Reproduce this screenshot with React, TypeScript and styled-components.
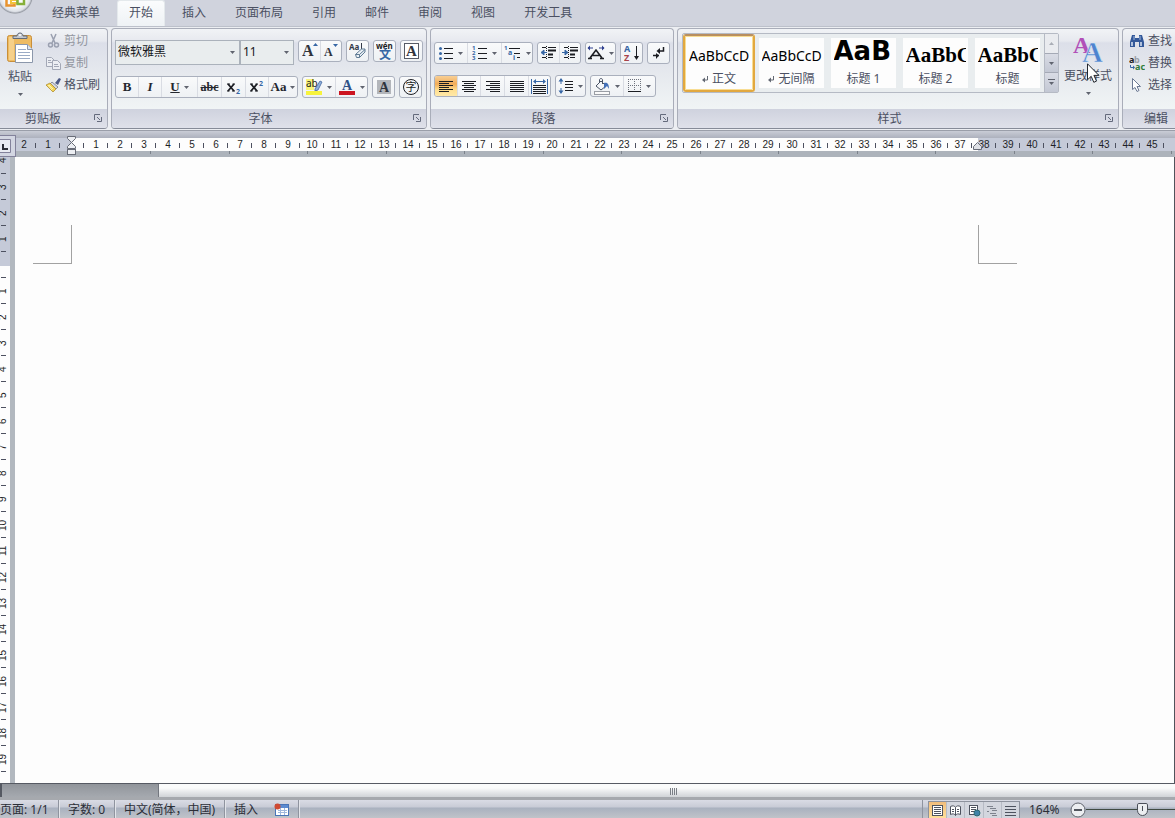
import React from "react";
import styled, { createGlobalStyle, css } from "styled-components";

const GlobalStyle = createGlobalStyle`
  * { box-sizing: border-box; }
  html, body, #root { height: 100%; }
  body {
    margin: 0;
    overflow: hidden;
    font-family: "Noto Sans", "Noto Sans CJK SC", sans-serif;
    font-size: 12px;
    line-height: 16px;
    color: #4b5062;
  }
  button, select, input { font: inherit; color: inherit; margin: 0; padding: 0; }
  button { border: 0; background: none; }
  svg { display: block; flex: none; }
`;

const Window = styled.div`
  display: flex;
  flex-direction: column;
  height: 100vh;
  overflow: hidden;
  background: #d0d3dd;
`;

/* ---------- tabs ---------- */
const TabBar = styled.nav`
  display: flex;
  flex: none;
  height: 26px;
  background: #d0d3dd;
`;
const OfficeButton = styled.button`
  width: 40px;
  height: 26px;
  overflow: hidden;
`;
const Tabs = styled.div`
  display: flex;
  gap: 5px;
`;
const Tab = styled.button<{ $active?: boolean }>`
  height: 26px;
  padding: 0 11px 1px;
  border: 1px solid transparent;
  border-bottom: 0;
  white-space: nowrap;
  ${(p) =>
    p.$active &&
    css`
      border-color: #e4e9ec;
      border-radius: 3px 3px 0 0;
      background: linear-gradient(#fbfcfd, #eef2f5);
    `}
`;

/* ---------- ribbon ---------- */
const Ribbon = styled.div`
  display: flex;
  flex: none;
  gap: 3px;
  height: 105px;
  padding-top: 1px;
  overflow: hidden;
  background: #eceef2;
  border-top: 1px solid #bcc0ca;
  border-bottom: 1px solid #9a9ea9;
`;
const Group = styled.section<{ $w: number; $bleed?: boolean }>`
  display: flex;
  flex-direction: column;
  flex: none;
  width: ${(p) => p.$w}px;
  height: 101px;
  margin-left: ${(p) => (p.$bleed ? "-5px" : "0")};
  border: 1px solid #a9adb9;
  border-bottom-color: #868b98;
  border-radius: 4px;
  background: linear-gradient(#f1f3f6 0, #e7e9ef 12px, #dcdfe9 14px, #e6e9ee 45px, #f0f4f5 79px);
  overflow: hidden;
`;
const GroupBody = styled.div<{ $top?: number; $gap?: number; $side?: number }>`
  display: flex;
  flex-direction: column;
  flex: 1;
  gap: ${(p) => p.$gap ?? 0}px;
  padding: ${(p) => p.$top ?? 0}px ${(p) => p.$side ?? 3}px 0;
`;
const GroupRow = styled.div`
  display: flex;
  flex: 1;
`;
const GroupFooter = styled.footer`
  display: flex;
  align-items: center;
  height: 19px;
  background: linear-gradient(#cfd2de, #dfe1ea);
`;
const GroupName = styled.span`
  flex: 1;
  text-align: center;
`;
const Launcher = styled.button`
  width: 17px;
  height: 14px;
  padding: 0 0 2px 4px;
`;
const Row = styled.div`
  display: flex;
  align-items: flex-start;
  gap: 4px;
`;
const Strip = styled.div`
  display: flex;
  height: 22px;
  border: 1px solid #aab0bd;
  border-radius: 3px;
  background: linear-gradient(#f9fafb, #eef1f4);
  overflow: hidden;
`;
const ToolButton = styled.button<{ $w?: number; $on?: boolean }>`
  display: flex;
  align-items: center;
  justify-content: center;
  gap: 4px;
  width: ${(p) => p.$w ?? 21}px;
  height: 20px;
  color: #24272e;
  & + & { border-left: 1px solid #d9dce3; }
  ${(p) =>
    p.$on &&
    css`
      background: linear-gradient(#f8cf94, #f2ac58 40%, #ffdf90 70%, #ffe9a8);
    `}
`;
const SerifLabel = styled.span<{ $size?: number; $italic?: boolean; $line?: string }>`
  font-family: "Liberation Serif", serif;
  font-weight: bold;
  font-size: ${(p) => p.$size ?? 13}px;
  font-style: ${(p) => (p.$italic ? "italic" : "normal")};
  text-decoration: ${(p) => p.$line ?? "none"};
  line-height: 20px;
`;
const Combo = styled.label<{ $w: number }>`
  display: flex;
  align-items: center;
  width: ${(p) => p.$w}px;
  height: 25px;
  padding: 0 4px 1px 2px;
  border: 1px solid #abb2bb;
  background: #e9edee;
  color: #15171b;
`;
const ComboSelect = styled.select`
  flex: 1;
  min-width: 0;
  appearance: none;
  border: 0;
  outline: 0;
  background: transparent;
`;
const Combos = styled.div`
  display: flex;
  width: 179px;
`;

const BigButton = styled.button<{ $w: number }>`
  position: relative;
  display: flex;
  flex-direction: column;
  align-items: center;
  width: ${(p) => p.$w}px;
  height: 68px;
  padding-top: 2px;
  gap: 5px;
  white-space: nowrap;
`;
const BigLabel = styled.span`
  padding-bottom: 3px;
`;
const SmallList = styled.div<{ $pad: number }>`
  display: flex;
  flex-direction: column;
  padding: 1px 0 0 ${(p) => p.$pad}px;
`;
const SmallButton = styled.button`
  display: flex;
  align-items: center;
  gap: 3px;
  height: 22px;
  white-space: nowrap;
  &:disabled { color: #92969f; }
`;
const Pointer = styled.svg`
  position: absolute;
  left: 24px;
  top: 30px;
`;

/* ---------- style gallery ---------- */
const Gallery = styled.div`
  display: flex;
  width: 377px;
  height: 60px;
  border: 1px solid #b5bac4;
  border-radius: 2px;
  background: #e9edef;
`;
const GalleryItems = styled.div`
  display: flex;
  flex: 1;
`;
const StyleItem = styled.button<{ $on?: boolean }>`
  width: 72px;
  height: 58px;
  border: 4px solid #e9edef;
  border-right-width: 3px;
  background: #fdfdfd;
  overflow: hidden;
  white-space: nowrap;
  ${(p) =>
    p.$on &&
    css`
      border: 2px solid #e2a83f;
      border-top-color: #b98f60;
      border-radius: 3px;
      padding: 2px;
      box-shadow: inset 0 0 0 1px #f8dd93;
    `}
`;
const Preview = styled.span<{ $font: string; $size: number; $bold?: boolean }>`
  display: block;
  width: 60px;
  height: 32px;
  margin: 0 auto;
  overflow: hidden;
  text-align: left;
  line-height: ${(p) => (p.$size > 24 ? 27 : 35)}px;
  font-family: ${(p) => p.$font};
  font-size: ${(p) => p.$size}px;
  font-weight: ${(p) => (p.$bold ? "bold" : "normal")};
  color: #000;
`;
const StyleName = styled.span`
  display: flex;
  align-items: center;
  justify-content: center;
  gap: 4px;
  height: 18px;
`;
const GalleryScroll = styled.div`
  display: flex;
  flex-direction: column;
  width: 14px;
  border-left: 1px solid #b5bac4;
`;
const ScrollStep = styled.button<{ $dim?: boolean }>`
  display: flex;
  flex: 1;
  align-items: center;
  justify-content: center;
  background: ${(p) => (p.$dim ? "#e9ebef" : "linear-gradient(#d9dce5, #c3c8d4)")};
  & + & { border-top: 1px solid #a4a9b5; }
`;

/* ---------- rulers and page ---------- */
const RulerRow = styled.div`
  display: flex;
  flex: none;
  height: 26px;
  padding-top: 4px;
  background: linear-gradient(#c9ccd6, #adb1bd 7px, #c9ced6 8px);
`;
const TabStop = styled.button`
  display: flex;
  align-items: center;
  width: 16px;
  height: 22px;
  border: 1px solid #83829b;
  border-left: 0;
  background: #d3d6e2;
`;
const HRuler = styled.div`
  flex: 1;
  min-width: 0;
  height: 22px;
  padding-top: 3px;
  overflow: hidden;
`;
const Scale = styled.div`
  position: relative;
  display: flex;
  height: 13px;
  background: linear-gradient(90deg, #c5cad8 0 55px, #fdfdfd 55px 962px, #c5cad8 962px);
`;
const ScaleBase = styled.div`
  height: 6px;
  background:
    repeating-linear-gradient(90deg, transparent 0 77px, #7c828b 77px 78px, transparent 78px 156px, #7c828b 156px 157px) 57px 0 no-repeat,
    #adb3bb;
  background-size: 100% 3px, auto;
`;
const ScaleCell = styled.span<{ $first?: boolean }>`
  flex: none;
  width: ${(p) => (p.$first ? 20 : 24)}px;
  padding-right: ${(p) => (p.$first ? 4 : 0)}px;
  font: 10px/14px "Liberation Sans", sans-serif;
  color: #1d1f26;
  text-align: center;
  background: linear-gradient(#4d5160, #4d5160) right 5px / 1px 5px no-repeat;
`;
const Marker = styled.svg<{ $x: number }>`
  position: absolute;
  top: -2px;
  left: ${(p) => p.$x}px;
`;
const Body = styled.div`
  display: flex;
  flex: 1;
  min-height: 0;
`;
const VRuler = styled.div`
  display: flex;
  flex-direction: column;
  align-items: flex-start;
  width: 15px;
  overflow: hidden;
  border-right: 5px solid #b2b8bf;
  background: linear-gradient(#c5cad8 0 109px, #fdfdfd 109px);
`;
const VCell = styled.span<{ $first?: boolean }>`
  flex: none;
  width: 10px;
  height: ${(p) => (p.$first ? 17 : 26)}px;
  padding-left: 4px;
  writing-mode: vertical-rl;
  transform: rotate(180deg);
  font: 10px/6px "Liberation Sans", sans-serif;
  color: #1d1f26;
  text-align: ${(p) => (p.$first ? "right" : "center")};
  background: linear-gradient(#4d5160, #4d5160) 4px 0 / 5px 1px no-repeat;
`;
const Paper = styled.main`
  flex: 1;
  padding: 68px 0 0 18px;
  background: #fdfdfd;
  border-right: 1px solid #4f535b;
`;
const Crops = styled.div`
  display: flex;
  justify-content: space-between;
  width: 984px;
`;
const Crop = styled.span<{ $right?: boolean }>`
  width: 39px;
  height: 39px;
  border: 0 solid #a2a2a2;
  border-bottom-width: 1px;
  border-left-width: ${(p) => (p.$right ? 1 : 0)}px;
  border-right-width: ${(p) => (p.$right ? 0 : 1)}px;
`;

/* ---------- bottom bars ---------- */
const ScrollBar = styled.div`
  display: flex;
  flex: none;
  height: 17px;
  border-top: 1px solid #565a63;
  border-bottom: 3px solid #a6a9ae;
  background: #a2a6ac;
`;
const ScrollTrack = styled.div`
  width: 158px;
  background: linear-gradient(90deg, #555962 0 2px, transparent 2px), linear-gradient(#91959b, #a5a9af);
`;
const ScrollThumb = styled.div`
  display: flex;
  flex: 1;
  align-items: center;
  justify-content: center;
  border-left: 1px solid #73777f;
  background: linear-gradient(#fafbfb 30%, #d0d3d7);
  padding: 2px 0 0 13px;
`;
const StatusBar = styled.footer`
  display: flex;
  flex: none;
  height: 18px;
  overflow: hidden;
  background: linear-gradient(#dadce5, #c8cbd6 7px, #a9b1bf 8px, #c0c3c9);
  color: #2b2e37;
`;
const StatusItem = styled.button<{ $w: number; $sep?: boolean; $pad?: number }>`
  display: flex;
  align-items: center;
  width: ${(p) => p.$w}px;
  height: 18px;
  padding-left: ${(p) => p.$pad ?? 9}px;
  padding-top: 2px;
  white-space: nowrap;
  ${(p) =>
    p.$sep &&
    css`
      border-right: 1px solid #8f949f;
      box-shadow: 1px 0 #e3e5ea;
    `}
`;
const StatusSpacer = styled.div`
  flex: 1;
  border-right: 1px solid #8f949f;
`;
const Views = styled.div`
  display: flex;
  width: 92px;
  height: 17px;
  margin: 1px 9px 0 5px;
  border: 1px solid #8d929d;
  border-bottom: 0;
  background: #d3d6de;
`;
const ViewButton = styled.button<{ $on?: boolean }>`
  display: flex;
  flex: 1;
  align-items: center;
  justify-content: center;
  padding-top: 2px;
  background: ${(p) => (p.$on ? "linear-gradient(#f1bd7c, #ffe09a)" : "transparent")};
  & + & { border-left: 1px solid #b7bbc5; }
`;
const ZoomLevel = styled.button`
  width: 41px;
  height: 18px;
  padding-top: 2px;
  text-align: left;
`;
const ZoomOut = styled.button`
  width: 16px;
  height: 18px;
  padding-top: 2px;
`;
const thumb = css`
  appearance: none;
  width: 11px;
  height: 13px;
  border: 1px solid #4a4e58;
  border-radius: 2px 2px 6px 6px;
  background: linear-gradient(#4a4e58, #4a4e58) center 2px / 1px 5px no-repeat, #eceef1;
`;
const ZoomSlider = styled.input`
  appearance: none;
  flex: none;
  width: 118px;
  height: 18px;
  margin-right: -29px;
  padding-top: 1px;
  background: linear-gradient(#3f4a42, #3f4a42) 0 9px / 100% 1px no-repeat;
  &::-webkit-slider-thumb { ${thumb} }
  &::-moz-range-thumb { ${thumb} }
`;
const ZoomLabel = styled.label`
  display: flex;
`;

/* ---------- icons ---------- */
const Caret = () => (
  <svg width="5" height="3" viewBox="0 0 5 3"><path d="M0 0h5L2.5 3z" fill="#60646f" /></svg>
);
const ink = "#1b1d22";
const blue = "#3767a5";

const OfficeLogo = () => (
  <svg width="40" height="26" viewBox="0 0 40 26">
    <defs>
      <radialGradient id="orb" cx="0.5" cy="0.5" r="0.5">
        <stop offset="0.6" stopColor="#fafbfc" />
        <stop offset="0.86" stopColor="#dde0e6" />
        <stop offset="0.95" stopColor="#9a9ea8" />
        <stop offset="1" stopColor="#c6c9d1" />
      </radialGradient>
    </defs>
    <circle cx="15" cy="-4" r="18" fill="url(#orb)" />
    <path d="M6.500 -4v9.500h8v-9" fill="none" stroke="#e8932f" strokeWidth="2.500" />
    <path d="M11 3v-3h6v3z" fill="#fff" stroke="#f3c33c" strokeWidth="2" />
    <path d="M17.500 -4v8h6.500v-8" fill="none" stroke="#86b03a" strokeWidth="2.500" />
  </svg>
);
const PasteIcon = () => (
  <svg width="28" height="32" viewBox="0 0 28 32">
    <rect x="1.500" y="3.500" width="24" height="26" rx="2" fill="#eebb62" stroke="#c98f3a" />
    <rect x="3" y="5" width="5" height="23" fill="#f6d08a" />
    <path d="M7 6.500V4h4c0-4 6-4 6 0h4v2.500z" fill="#c3c8d0" stroke="#636b78" />
    <circle cx="14" cy="3" r="1" fill="#fff" />
    <path d="M9.500 12.500h12l5 5v13h-17z" fill="#fff" stroke="#8b97ab" />
    <path d="M21.500 12.500v5h5" fill="#dce4f0" stroke="#8b97ab" />
    <path d="M12 17.500h8M12 20.500h12M12 23.500h12M12 26.500h12" stroke="#9aabc6" />
  </svg>
);
const CutIcon = () => (
  <svg width="15" height="16" viewBox="0 0 15 16" fill="none" stroke="#9aa0b0">
    <path d="M5 1l4 9M10 1L6 10" strokeWidth="1.500" />
    <circle cx="4.500" cy="12" r="2" strokeWidth="1.500" /><circle cx="10.500" cy="12" r="2" strokeWidth="1.500" />
  </svg>
);
const CopyIcon = () => (
  <svg width="15" height="16" viewBox="0 0 15 16" fill="#eceef3" stroke="#a3a8b6">
    <path d="M.5 2.500h5l3 3v6h-8z" /><path d="M2 5.500h3M2 7.500h4" />
    <path d="M6.500 5.500h5l3 3v6h-8z" /><path d="M8 9.500h4M8 11.500h5" />
  </svg>
);
const BrushIcon = () => (
  <svg width="15" height="16" viewBox="0 0 15 16">
    <path d="M9 6l4-5 2 1-3 6z" fill="#4d5a86" />
    <path d="M6 5l6 5-2 2-6-5z" fill="#d4d8e2" stroke="#666d7d" strokeWidth="0.7" />
    <path d="M4 6l6 6-3 3L0 8z" fill="#f3d558" stroke="#a98425" strokeWidth="0.7" />
    <path d="M3 8l4 4M2 8l4 5" stroke="#fff3ac" />
  </svg>
);
const LauncherIcon = () => (
  <svg width="8" height="8" viewBox="0 0 8 8" fill="none" stroke="#646a7c">
    <path d="M.5 6V.5H6M3 3l3 3M7.500 3v4.500H3" />
  </svg>
);
const GrowFont = ({ down }: { down?: boolean }) => (
  <svg width="16" height="18" viewBox="0 0 16 18">
    <text x={down ? 1 : 0} y="14" fontFamily="Liberation Serif" fontWeight="bold" fontSize={down ? 12 : 16} fill="#30343c">A</text>
    <path d={down ? "M10 2h5l-2.500 3z" : "M11 4h5l-2.500-3z"} fill={blue} />
  </svg>
);
const ClearFormat = () => (
  <svg width="18" height="18" viewBox="0 0 18 18">
    <text x="0" y="8" fontFamily="Noto Sans" fontSize="8" fontWeight="bold" fill="#333a48">Aa</text>
    <path d="M12.500 1v7" stroke="#333a48" />
    <path d="M6.500 12.500l6-5.500h3.500v3l-5.500 5.500h-3z" fill="#eaf0f5" stroke="#5f7b94" />
    <path d="M6.500 12.500h4l5.500-5M10.500 12.500v3" fill="none" stroke="#5f7b94" />
  </svg>
);
const Phonetic = () => (
  <svg width="18" height="18" viewBox="0 0 18 18">
    <text x="0" y="7" fontFamily="Noto Sans" fontSize="8" fontWeight="bold" fill={ink}>wén</text>
    <text x="3" y="17" fontFamily="Noto Sans CJK SC" fontSize="12" fontWeight="bold" fill={blue}>文</text>
  </svg>
);
const CharBorder = () => (
  <svg width="17" height="17" viewBox="0 0 17 17">
    <rect x="1.500" y="0.500" width="14" height="15" fill="#fff" stroke="#565b66" />
    <text x="8.500" y="13" textAnchor="middle" fontFamily="Liberation Serif" fontWeight="bold" fontSize="15" fill="#30343c">A</text>
  </svg>
);
const CharShade = () => (
  <svg width="16" height="16" viewBox="0 0 16 16">
    <rect x="1" y="1" width="14" height="14" fill="#b3b6bb" />
    <text x="8" y="13" textAnchor="middle" fontFamily="Liberation Serif" fontWeight="bold" fontSize="14" fill="#30343c">A</text>
  </svg>
);
const Enclosed = () => (
  <svg width="18" height="18" viewBox="0 0 18 18">
    <circle cx="9" cy="9" r="7.500" fill="none" stroke={ink} />
    <text x="9" y="13" textAnchor="middle" fontFamily="Noto Sans CJK SC" fontSize="11" fill={ink}>字</text>
  </svg>
);
const Script = ({ sup }: { sup?: boolean }) => (
  <svg width="16" height="16" viewBox="0 0 16 16">
    <path d="M2 5l6 7M8 5l-6 7" stroke={ink} strokeWidth="1.800" />
    <path d="M1 5h3M6.500 5H9M1 12h2.500M6 12h3" stroke={ink} />
    <text x="10" y={sup ? 7 : 15} fontFamily="Noto Sans" fontWeight="bold" fontSize="7" fill={blue}>2</text>
  </svg>
);
const Highlight = () => (
  <svg width="17" height="18" viewBox="0 0 17 18">
    <rect x="0" y="1" width="8" height="11" fill="#f8f37a" />
    <text x="0" y="9" fontFamily="Noto Sans" fontSize="10" fill={ink}>ab</text>
    <path d="M9 11l5-8 2 1-4 8-3 1z" fill="#8fb0dc" stroke="#44689f" strokeWidth="0.8" />
    <rect x="0" y="13" width="16" height="4" fill="#f7f33c" />
  </svg>
);
const FontColor = () => (
  <svg width="17" height="18" viewBox="0 0 17 18">
    <text x="8" y="12" textAnchor="middle" fontFamily="Liberation Serif" fontWeight="bold" fontSize="14" fill="#2f5187">A</text>
    <rect x="0" y="13" width="16" height="4" fill="#cc1420" />
  </svg>
);
const Bullets = () => (
  <svg width="15" height="16" viewBox="0 0 15 16">
    {[3, 8, 13].map((y) => <g key={y}><circle cx="1.500" cy={y + 0.5} r="1.500" fill={blue} /><path d={`M5 ${y}.5h9`} stroke={ink} /></g>)}
  </svg>
);
const Numbers = () => (
  <svg width="16" height="16" viewBox="0 0 16 16">
    {[3, 8, 13].map((y, i) => (
      <g key={y}>
        <text x="0" y={y + 2} fontFamily="Noto Sans" fontWeight="bold" fontSize="6" fill={blue}>{i + 1}</text>
        <path d={`M6 ${y}.5h9`} stroke={ink} />
      </g>
    ))}
  </svg>
);
const Multilevel = () => (
  <svg width="18" height="16" viewBox="0 0 18 16">
    <g fontFamily="Noto Sans" fontWeight="bold" fill={blue}>
      <text x="0" y="5" fontSize="6">1</text><text x="4" y="10" fontSize="7">a</text><text x="9" y="15" fontSize="7">i</text>
    </g>
    <path d="M5 3.500h11M10 8.500h6M13 12.500h3" stroke={ink} />
  </svg>
);
const Indent = ({ inc }: { inc?: boolean }) => (
  <svg width="17" height="16" viewBox="0 0 17 16">
    <path d="M2 2.500h4M8 2.500h8M2 12.500h4M8 12.500h5" stroke={ink} />
    <path d="M8 5.500h8M8 9.500h5" stroke={ink} strokeWidth="2" />
    <path d="M6.500 1v14" stroke={ink} strokeDasharray="1 1" />
    <path d={inc ? "M0 7.500h5M3 5l3 2.500L3 10z" : "M2 7.500h5M4 5L1 7.500 4 10z"} stroke={blue} fill={blue} />
  </svg>
);
const AsianLayout = () => (
  <svg width="18" height="16" viewBox="0 0 18 16">
    <path d="M1 3h5M12 3h5" stroke="#2e3f8f" />
    <path d="M3 .5L.5 3 3 5.500zM15 .5L17.500 3 15 5.500z" fill="#2e3f8f" />
    <path d="M3 13l6-8 6 8M5.500 10.500h7M1 13.500h4M13 13.500h4" fill="none" stroke={ink} strokeWidth="1.600" />
  </svg>
);
const SortIcon = () => (
  <svg width="16" height="18" viewBox="0 0 16 18">
    <text x="0" y="8" fontFamily="Noto Sans" fontWeight="bold" fontSize="9" fill={blue}>A</text>
    <text x="0" y="17" fontFamily="Noto Sans" fontWeight="bold" fontSize="9" fill="#a8434a">Z</text>
    <path d="M12.500 2v12" stroke={ink} /><path d="M10 12h5l-2.500 4z" fill={ink} />
  </svg>
);
const Marks = () => (
  <svg width="14" height="16" viewBox="0 0 14 16">
    <path d="M11.500 2v4H7" fill="none" stroke={ink} strokeWidth="1.500" /><path d="M8 3v6L4.500 6z" fill={ink} />
    <path d="M1 10.500h6" stroke={ink} strokeWidth="1.500" /><path d="M4 8v6l3-3.500z" fill={ink} />
  </svg>
);
const alignRows: Record<string, [number, number]> = {
  left: [0, 10],
  center: [2, 10],
  right: [4, 10],
  full: [0, 14],
};
const AlignIcon = ({ kind }: { kind: string }) => {
  const [x, w] = alignRows[kind];
  return (
    <svg width="14" height="11" viewBox="0 0 14 11" fill={ink}>
      {[0, 4, 8].map((y) => <rect key={y} x="0" y={y} width="14" height="1" />)}
      {[2, 6, 10].map((y) => <rect key={y} x={x} y={y} width={w} height="1" />)}
    </svg>
  );
};
const Distribute = () => (
  <svg width="17" height="17" viewBox="0 0 17 17">
    <path d="M.5 1v15M16.500 1v15" stroke={blue} />
    <path d="M3 3.500h11" stroke={blue} /><path d="M5 1L2 3.500 5 6zM12 1l3 2.500L12 6z" fill={blue} />
    <path d="M2 7.500h13M2 9.500h13M2 11.500h13M2 13.500h13M2 15.500h13" stroke={ink} />
  </svg>
);
const Spacing = () => (
  <svg width="16" height="16" viewBox="0 0 16 16">
    <path d="M3 1v5M3 10v5" stroke={blue} /><path d="M3 0L.5 3.500h5zM3 16L.5 12.500h5z" fill={blue} />
    <path d="M7 3.500h8M7 6.500h8M7 9.500h8M7 12.500h8" stroke={ink} />
  </svg>
);
const Bucket = () => (
  <svg width="17" height="17" viewBox="0 0 17 17">
    <path d="M2 8l5-5 5 5-5 4z" fill="#f5f7fa" stroke="#4a5466" /><path d="M5.500 5V2c0-2 3-2 3 0v4" fill="none" stroke="#4a5466" />
    <path d="M10 5c4-1 5 2 5 6l-2-3-3 3z" fill="#4470b7" />
    <rect x="0.500" y="13.500" width="15" height="3" fill="#fafafa" stroke="#9a9ea5" />
  </svg>
);
const Borders = () => (
  <svg width="14" height="14" viewBox="0 0 14 14" fill="none" stroke="#6e737d">
    <path d="M.5 0v13M6.500 0v13M12.500 0v13M0 .5h13M0 6.500h13" strokeDasharray="1 1" />
    <path d="M0 12.500h13" stroke={ink} />
  </svg>
);
const ReturnMark = () => (
  <svg width="6" height="8" viewBox="0 0 6 8"><path d="M5.500 1v4H2" fill="none" stroke="#636873" /><path d="M3 2.500v5L0 5z" fill="#636873" /></svg>
);
const StylesIcon = () => (
  <svg width="30" height="28" viewBox="0 0 30 28">
    <text x="0" y="18" fontFamily="Liberation Serif" fontWeight="bold" fontSize="24" fill="#b14fb8">A</text>
    <text x="9" y="27" fontFamily="Liberation Serif" fontWeight="bold" fontSize="29" fill="#4f83cf" stroke="#dfe8f5" strokeWidth="0.500">A</text>
  </svg>
);
const FindIcon = () => (
  <svg width="16" height="14" viewBox="0 0 16 14" fill="#33589a">
    <path d="M3 1h3v3h4V1h3l2 7v5h-5V8H6v5H1V8z" /><path d="M3 8v4M12 8v4" stroke="#dbe5f3" strokeWidth="1.500" /><path d="M5 2v4M11 2v4" stroke="#a5bbdd" />
  </svg>
);
const ReplaceIcon = () => (
  <svg width="16" height="16" viewBox="0 0 16 16" fontFamily="Noto Sans" fontWeight="bold" fontSize="9">
    <text x="0" y="8" fill={ink}>a</text><text x="5" y="8" fill="#9aa0a8">b</text><text x="6" y="15" fill="#2f7d3b">ac</text>
    <path d="M1.500 10v2.500H5" fill="none" stroke={blue} /><path d="M4 10.500v4L6 12.500z" fill={blue} />
  </svg>
);
const SelectIcon = () => (
  <svg width="16" height="16" viewBox="0 0 16 16">
    <path d="M3.500 1.500v11l2.500-2 2 4 2-1-2-4h3.500z" fill="#fff" stroke="#6c7a94" />
  </svg>
);
const MacroIcon = () => (
  <svg width="16" height="14" viewBox="0 0 16 14">
    <rect x="1.500" y="1.500" width="13" height="11" fill="#fff" stroke="#4874b8" /><rect x="2" y="2" width="12" height="3" fill="#5c8bd0" />
    <path d="M4 7.500h9M4 9.500h9M6.500 5v7M10.500 5v7" stroke="#9fb7dc" /><circle cx="3.500" cy="3.500" r="3" fill="#cf4a33" />
  </svg>
);
const ViewIcon = ({ kind }: { kind: number }) => (
  <svg width="13" height="12" viewBox="0 0 13 12" fill="none" stroke="#4e535f">
    {kind === 0 && <><rect x="1.500" y="0.500" width="10" height="10" fill="#fff" /><path d="M3 2.500h7M3 4.500h7M3 6.500h7M3 8.500h7" /></>}
    {kind === 1 && <><path d="M1.500 1.500c2-1 4-1 5 1 1-2 3-2 5-1v8c-2-1-4-1-5 1-1-2-3-2-5-1zM6.500 2.500v8" fill="#fff" /><path d="M3 4.500h2M3 6.500h2M8 4.500h2M8 6.500h2" /></>}
    {kind === 2 && <><rect x="1.500" y="0.500" width="8" height="9" fill="#fff" /><path d="M3 2.500h5M3 4.500h5M3 6.500h3" /><circle cx="9" cy="8" r="3" fill="#3f83a8" stroke="#2b6a73" /></>}
    {kind === 3 && <path d="M1 1.500h6M4 3.500h6M6 5.500h5M4 8.500h6M6 10.500h5M1 6.500h2" stroke="#7d828d" />}
    {kind === 4 && <path d="M1 1.500h11M1 4.500h11M1 7.500h11M1 10.500h11" />}
  </svg>
);

/* ---------- data ---------- */
const tabs = ["经典菜单", "开始", "插入", "页面布局", "引用", "邮件", "审阅", "视图", "开发工具"];
const serif = '"Liberation Serif", serif';
const sans = '"Noto Sans", sans-serif';
const styleItems = [
  { name: "正文", sample: "AaBbCcD", font: sans, size: 14, mark: true },
  { name: "无间隔", sample: "AaBbCcD", font: sans, size: 14, mark: true },
  { name: "标题 1", sample: "AaB", font: '"DejaVu Sans", sans-serif', size: 26, bold: true },
  { name: "标题 2", sample: "AaBbC", font: serif, size: 21, bold: true },
  { name: "标题", sample: "AaBbC", font: serif, size: 21, bold: true },
];
const hMarks = ["2", "1", "", ...Array.from({ length: 45 }, (_, i) => String(i + 1))];
const vMarks = ["4", "3", "2", "1", "", ...Array.from({ length: 19 }, (_, i) => String(i + 1))];

function Footer({ name, launcher = true }: { name: string; launcher?: boolean }) {
  return (
    <GroupFooter>
      <GroupName>{name}</GroupName>
      {launcher && <Launcher aria-label={`${name}选项`}><LauncherIcon /></Launcher>}
    </GroupFooter>
  );
}

export default function App() {
  return (
    <Window lang="zh-CN">
      <GlobalStyle />
      <TabBar>
        <OfficeButton aria-label="Office"><OfficeLogo /></OfficeButton>
        <Tabs>{tabs.map((t) => <Tab key={t} $active={t === "开始"}>{t}</Tab>)}</Tabs>
      </TabBar>

      <Ribbon>
        <Group $w={113} $bleed>
          <GroupRow>
            <SmallList $pad={4}>
              <BigButton $w={40}><PasteIcon /><BigLabel>粘贴</BigLabel><Caret /></BigButton>
            </SmallList>
            <SmallList $pad={6}>
              <SmallButton disabled><CutIcon />剪切</SmallButton>
              <SmallButton disabled><CopyIcon />复制</SmallButton>
              <SmallButton><BrushIcon />格式刷</SmallButton>
            </SmallList>
          </GroupRow>
          <Footer name="剪贴板" />
        </Group>

        <Group $w={316}>
          <GroupBody $top={11} $gap={11}>
            <Row>
              <Combos>
                <Combo $w={125}>
                  <ComboSelect aria-label="字体"><option>微软雅黑</option></ComboSelect><Caret />
                </Combo>
                <Combo $w={54}>
                  <ComboSelect aria-label="字号"><option>11</option></ComboSelect><Caret />
                </Combo>
              </Combos>
              <Strip>
                <ToolButton aria-label="增大字体"><GrowFont /></ToolButton>
                <ToolButton aria-label="缩小字体"><GrowFont down /></ToolButton>
              </Strip>
              <Strip><ToolButton aria-label="清除格式"><ClearFormat /></ToolButton></Strip>
              <Strip><ToolButton aria-label="拼音指南"><Phonetic /></ToolButton></Strip>
              <Strip><ToolButton aria-label="字符边框"><CharBorder /></ToolButton></Strip>
            </Row>
            <Row>
              <Strip>
                <ToolButton $w={22}><SerifLabel>B</SerifLabel></ToolButton>
                <ToolButton $w={23}><SerifLabel $italic>I</SerifLabel></ToolButton>
                <ToolButton $w={36}><SerifLabel $line="underline">U</SerifLabel><Caret /></ToolButton>
                <ToolButton $w={24}><SerifLabel $size={12} $line="line-through">abc</SerifLabel></ToolButton>
                <ToolButton $w={24} aria-label="下标"><Script /></ToolButton>
                <ToolButton $w={23} aria-label="上标"><Script sup /></ToolButton>
                <ToolButton $w={29}><SerifLabel>Aa</SerifLabel><Caret /></ToolButton>
              </Strip>
              <Strip>
                <ToolButton $w={32} aria-label="突出显示"><Highlight /><Caret /></ToolButton>
                <ToolButton $w={32} aria-label="字体颜色"><FontColor /><Caret /></ToolButton>
              </Strip>
              <Strip><ToolButton aria-label="字符底纹"><CharShade /></ToolButton></Strip>
              <Strip><ToolButton aria-label="带圈字符"><Enclosed /></ToolButton></Strip>
            </Row>
          </GroupBody>
          <Footer name="字体" />
        </Group>

        <Group $w={244}>
          <GroupBody $top={13} $gap={11}>
            <Row>
              <Strip>
                <ToolButton $w={32} aria-label="项目符号"><Bullets /><Caret /></ToolButton>
                <ToolButton $w={34} aria-label="编号"><Numbers /><Caret /></ToolButton>
                <ToolButton $w={31} aria-label="多级列表"><Multilevel /><Caret /></ToolButton>
              </Strip>
              <Strip>
                <ToolButton aria-label="减少缩进"><Indent /></ToolButton>
                <ToolButton aria-label="增加缩进"><Indent inc /></ToolButton>
              </Strip>
              <Strip><ToolButton $w={29} aria-label="中文版式"><AsianLayout /><Caret /></ToolButton></Strip>
              <Strip><ToolButton aria-label="排序"><SortIcon /></ToolButton></Strip>
              <Strip><ToolButton aria-label="显示标记"><Marks /></ToolButton></Strip>
            </Row>
            <Row>
              <Strip>
                <ToolButton $w={22} $on aria-label="左对齐"><AlignIcon kind="left" /></ToolButton>
                <ToolButton $w={23} aria-label="居中"><AlignIcon kind="center" /></ToolButton>
                <ToolButton $w={24} aria-label="右对齐"><AlignIcon kind="right" /></ToolButton>
                <ToolButton $w={24} aria-label="两端对齐"><AlignIcon kind="full" /></ToolButton>
                <ToolButton $w={22} aria-label="分散对齐"><Distribute /></ToolButton>
              </Strip>
              <Strip><ToolButton $w={29} aria-label="行距"><Spacing /><Caret /></ToolButton></Strip>
              <Strip>
                <ToolButton $w={32} aria-label="底纹"><Bucket /><Caret /></ToolButton>
                <ToolButton $w={32} aria-label="边框"><Borders /><Caret /></ToolButton>
              </Strip>
            </Row>
          </GroupBody>
          <Footer name="段落" />
        </Group>

        <Group $w={442}>
          <GroupBody $top={4} $side={4}>
            <Row>
              <Gallery>
                <GalleryItems>
                  {styleItems.map((s, i) => (
                    <StyleItem key={s.name} $on={i === 0}>
                      <Preview $font={s.font} $size={s.size} $bold={s.bold}>{s.sample}</Preview>
                      <StyleName>{s.mark && <ReturnMark />}{s.name}</StyleName>
                    </StyleItem>
                  ))}
                </GalleryItems>
                <GalleryScroll>
                  <ScrollStep $dim aria-label="上一行"><svg width="5" height="3"><path d="M0 3h5L2.500 0z" fill="#a9adb6" /></svg></ScrollStep>
                  <ScrollStep aria-label="下一行"><Caret /></ScrollStep>
                  <ScrollStep aria-label="其他"><svg width="7" height="7"><path d="M0 .5h7" stroke="#60646f" /><path d="M1 3h5L3.500 6z" fill="#60646f" /></svg></ScrollStep>
                </GalleryScroll>
              </Gallery>
              <BigButton $w={50}>
                <StylesIcon /><BigLabel>更改样式</BigLabel><Caret />
                <Pointer width="13" height="21" viewBox="0 0 13 21">
                  <path d="M.5.8v16l3.700-3.500 2.600 6 2.700-1.200-2.600-5.700h5z" fill="#fff" stroke="#23262d" />
                </Pointer>
              </BigButton>
            </Row>
          </GroupBody>
          <Footer name="样式" />
        </Group>

        <Group $w={68}>
          <GroupRow>
            <SmallList $pad={6}>
              <SmallButton><FindIcon />查找</SmallButton>
              <SmallButton><ReplaceIcon />替换</SmallButton>
              <SmallButton><SelectIcon />选择</SmallButton>
            </SmallList>
          </GroupRow>
          <Footer name="编辑" launcher={false} />
        </Group>
      </Ribbon>

      <RulerRow>
        <TabStop aria-label="制表符">
          <svg width="12" height="14" viewBox="0 0 12 14">
            <path d="M-1 .5h11.500v13H-1" fill="#e9ebf2" stroke="#83829b" />
            <path d="M3 5v5h5" fill="none" stroke="#2c2e36" strokeWidth="2" />
          </svg>
        </TabStop>
        <HRuler>
          <Scale>
            {hMarks.map((m, i) => <ScaleCell key={i} $first={i === 0}>{m}</ScaleCell>)}
            <Marker $x={51} width="10" height="20" viewBox="0 0 10 20">
              <path d="M.5.5h8v2l-4 4-4-4zM4.500 6.500l4 4v2h-8v-2z" fill="#eceef2" stroke="#686c77" />
              <rect x="0.500" y="13.500" width="8" height="5" fill="#eceef2" stroke="#686c77" />
            </Marker>
            <Marker $x={957} width="10" height="20" viewBox="0 0 10 20">
              <path d="M4.500 6.500l4 4v3h-8v-3z" fill="#dfe1e6" stroke="#686c77" />
            </Marker>
          </Scale>
          <ScaleBase />
        </HRuler>
      </RulerRow>

      <Body>
        <VRuler>{vMarks.map((m, i) => <VCell key={i} $first={i === 0}>{m}</VCell>)}</VRuler>
        <Paper><Crops><Crop /><Crop $right /></Crops></Paper>
      </Body>

      <ScrollBar>
        <ScrollTrack />
        <ScrollThumb>
          <svg width="8" height="8" viewBox="0 0 8 8"><path d="M.5 0v7M2.500 0v7M4.500 0v7M6.500 0v7" stroke="#7b7f86" /></svg>
        </ScrollThumb>
      </ScrollBar>

      <StatusBar>
        <StatusItem $w={59} $sep $pad={0}>页面: 1/1</StatusItem>
        <StatusItem $w={56} $sep>字数: 0</StatusItem>
        <StatusItem $w={110} $sep>中文(简体，中国)</StatusItem>
        <StatusItem $w={48}>插入</StatusItem>
        <StatusItem $w={26} $sep $pad={1} aria-label="录制宏"><MacroIcon /></StatusItem>
        <StatusSpacer />
        <Views>
          {[0, 1, 2, 3, 4].map((k) => <ViewButton key={k} $on={k === 0} aria-label={`视图 ${k + 1}`}><ViewIcon kind={k} /></ViewButton>)}
        </Views>
        <ZoomLevel>164%</ZoomLevel>
        <ZoomOut aria-label="缩小">
          <svg width="16" height="16" viewBox="0 0 16 16"><circle cx="8" cy="8" r="7" fill="#eceef1" stroke="#61656e" /><path d="M4 8h8" stroke="#51555e" strokeWidth="2" /></svg>
        </ZoomOut>
        <ZoomLabel><ZoomSlider type="range" aria-label="显示比例" defaultValue={48} /></ZoomLabel>
      </StatusBar>
    </Window>
  );
}
